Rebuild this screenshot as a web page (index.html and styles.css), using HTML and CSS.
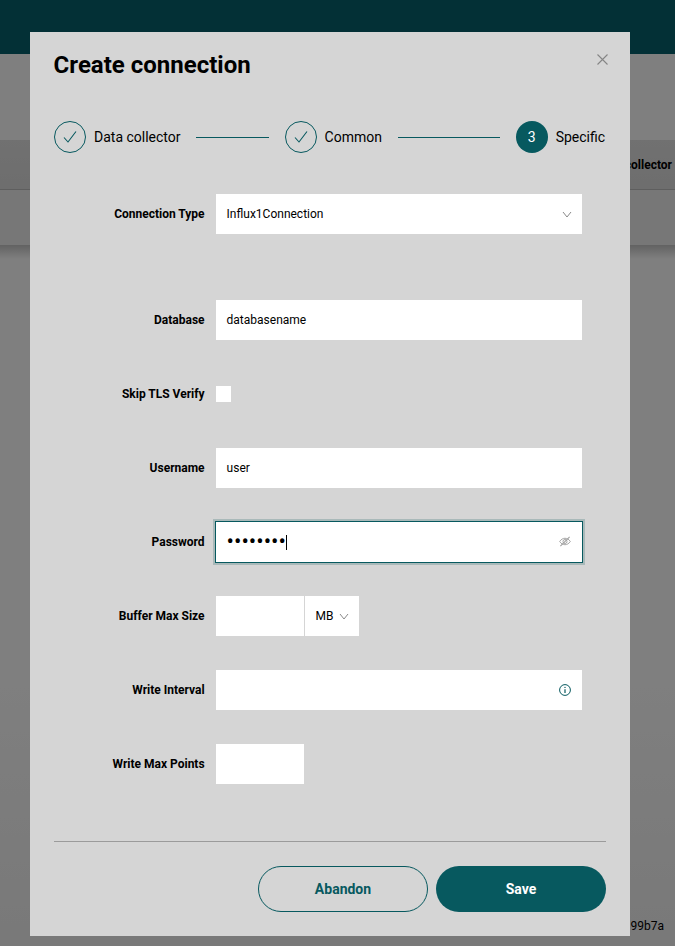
FILE: index.html
```html
<!DOCTYPE html>
<html lang="en">
<head>
<meta charset="utf-8">
<title>Create connection</title>
<link rel="stylesheet" href="styles.css">
</head>
<body>
<div class="page">
  <header class="topbar"></header>
  <div class="page-gap"></div>
  <div class="table-head"><span class="table-col">Data collector</span></div>
  <div class="table-row"></div>
  <div class="page-rest"><span class="hash">99b7a</span></div>
</div>
<div class="overlay">
  <section class="modal">
    <button class="close" aria-label="Close">
      <svg width="11" height="11" viewBox="0 0 11 11"><path d="M.5.5l10 10M10.500.5l-10 10" fill="none" stroke="#858585" stroke-width="1.1"/></svg>
    </button>
    <h1 class="title">Create connection</h1>
    <ol class="stepper">
      <li class="step">
        <span class="circle circle-done"><svg width="16" height="14" viewBox="0 0 16 14"><path d="M2 7.500l4 4.500 8-10.500" fill="none" stroke="#07595f" stroke-width="1.1"/></svg></span>
        <span class="step-label">Data collector</span>
      </li>
      <li class="line line-a"></li>
      <li class="step">
        <span class="circle circle-done"><svg width="16" height="14" viewBox="0 0 16 14"><path d="M2 7.500l4 4.500 8-10.500" fill="none" stroke="#07595f" stroke-width="1.1"/></svg></span>
        <span class="step-label">Common</span>
      </li>
      <li class="line line-b"></li>
      <li class="step">
        <span class="circle circle-active">3</span>
        <span class="step-label">Specific</span>
      </li>
    </ol>
    <form class="form">
      <div class="row row-type">
        <span class="label">Connection Type</span>
        <div class="field field-full">
          <span class="value">Influx1Connection</span>
          <svg class="chev" width="10" height="7" viewBox="0 0 10 7"><path d="M1 1l4 5 4-5" fill="none" stroke="#8a8a8a" stroke-width="1"/></svg>
        </div>
      </div>
      <div class="row">
        <span class="label">Database</span>
        <div class="field field-full"><span class="value">databasename</span></div>
      </div>
      <div class="row">
        <span class="label">Skip TLS Verify</span>
        <span class="checkbox"></span>
      </div>
      <div class="row">
        <span class="label">Username</span>
        <div class="field field-full"><span class="value">user</span></div>
      </div>
      <div class="row">
        <span class="label">Password</span>
        <div class="field field-full field-focus">
          <span class="value value-pass">••••••••</span><span class="caret"></span>
          <svg class="field-icon" width="12" height="11" viewBox="0 0 13 11"><path d="M.7 5.500C2.300 3.200 4.200 2 6.500 2s4.200 1.200 5.800 3.500C10.700 7.800 8.800 9 6.500 9S2.300 7.800.7 5.500z" fill="none" stroke="#a0a0a0" stroke-width="1"/><circle cx="6.500" cy="5.500" r="2.200" fill="none" stroke="#a0a0a0" stroke-width="1"/><path d="M1.500 10.500L11.500.5" stroke="#a0a0a0" stroke-width="1.100"/></svg>
        </div>
      </div>
      <div class="row">
        <span class="label">Buffer Max Size</span>
        <div class="field field-short"></div>
        <div class="field field-unit">
          <span class="value">MB</span>
          <svg class="chev" width="10" height="7" viewBox="0 0 10 7"><path d="M1 1l4 5 4-5" fill="none" stroke="#8a8a8a" stroke-width="1"/></svg>
        </div>
      </div>
      <div class="row">
        <span class="label">Write Interval</span>
        <div class="field field-full">
          <svg class="field-icon" width="12" height="12" viewBox="0 0 12 12"><circle cx="6" cy="6" r="5.400" fill="none" stroke="#07595f" stroke-width="1"/><path d="M6 5.200V9" stroke="#07595f" stroke-width="1.200"/><circle cx="6" cy="3.400" r=".7" fill="#07595f"/></svg>
        </div>
      </div>
      <div class="row">
        <span class="label">Write Max Points</span>
        <div class="field field-short"></div>
      </div>
    </form>
    <footer class="actions">
      <button class="btn btn-outline" type="button">Abandon</button>
      <button class="btn btn-solid" type="button">Save</button>
    </footer>
  </section>
</div>
</body>
</html>
```

FILE: styles.css
```css
* { box-sizing: border-box; }
html, body { margin: 0; padding: 0; height: 100%; overflow: hidden; }
body { font-family: Roboto, "Liberation Sans", sans-serif; color: #000; background: #fff; }

.page { height: 946px; display: flex; flex-direction: column; }
.topbar { height: 54px; background: #06606c; }
.page-gap { height: 86px; background: #fff; }
.table-head { height: 50px; background: linear-gradient(#e2e2e2, #dcdcdc); border-bottom: 1px solid #bdbdbd; display: flex; justify-content: flex-end; align-items: center; padding-right: 3px; }
.table-col { font-size: 12px; font-weight: 700; }
.table-row { height: 55px; background: #efefef; }
.page-rest { flex: 1; background: linear-gradient(#c4c4c4, #fff 14px, #fff 60%, #f2f2f2); display: flex; justify-content: flex-end; align-items: flex-end; padding: 0 11px 13px 0; }
.hash { font-size: 12px; color: #000; }

.overlay { position: fixed; inset: 0; background: rgba(0, 0, 0, .5); display: flex; padding: 32px 0 0 30px; }
.modal { position: relative; width: 600px; height: 904px; background: #d5d5d5; padding: 0 24px; display: flex; flex-direction: column; }
.close { position: absolute; top: 22px; right: 22px; padding: 0; border: 0; background: none; display: flex; }
.title { margin: 0 0 0 -.4px; padding-top: 19px; height: 89px; font-size: 24px; line-height: 28px; font-weight: 700; }

.stepper { list-style: none; margin: 0; padding: 0; display: flex; align-items: center; height: 32px; }
.step { display: flex; align-items: center; gap: 8px; }
.circle { width: 32px; height: 32px; border-radius: 50%; display: flex; align-items: center; justify-content: center; flex: none; font-size: 14px; }
.circle-done { border: 1px solid #07595f; }
.circle-active { background: #07595f; color: #fff; }
.step-label { font-size: 14px; line-height: 32px; white-space: nowrap; }
.line { height: 1px; background: #07595f; margin: 0 16px; }
.line-a { width: 73px; margin-left: 15.100px; }
.line-b { width: 102px; margin-left: 15.700px; }

.form { padding-top: 41px; flex: 1; display: flex; flex-direction: column; gap: 34px; }
.row { display: flex; align-items: center; height: 40px; }
.row-type { margin-bottom: 32px; }
.label { width: 150.600px; margin-right: 11.400px; text-align: right; font-size: 12px; font-weight: 700; }
.field { height: 40px; background: #fff; display: flex; align-items: center; position: relative; }
.field-full { width: 366px; padding: 0 10.600px; }
.field-short { width: 88px; }
.field-unit { width: 54px; margin-left: 1px; padding: 0 10.600px; }
.field-focus { box-shadow: 0 0 0 1px #07595f, 0 0 0 3px #a9b9b9; }
.value { font-size: 12px; }
.value-pass { font-size: 22px; line-height: 1; }
.caret { width: 1px; height: 15px; background: #000; }
.chev { position: absolute; right: 10px; top: 17px; }
.field-icon { position: absolute; right: 11px; top: 14px; }
.checkbox { width: 15px; height: 16px; background: #fff; }

.actions { border-top: 1px solid #9b9b9b; height: 95px; padding-top: 24px; display: flex; justify-content: flex-end; gap: 8px; }
.btn { width: 170px; height: 46px; border-radius: 23px; font: 700 14px Roboto, "Liberation Sans", sans-serif; }
.btn-outline { background: none; border: 1px solid #07595f; color: #07595f; }
.btn-solid { background: #07595f; border: 0; color: #fff; }
```
